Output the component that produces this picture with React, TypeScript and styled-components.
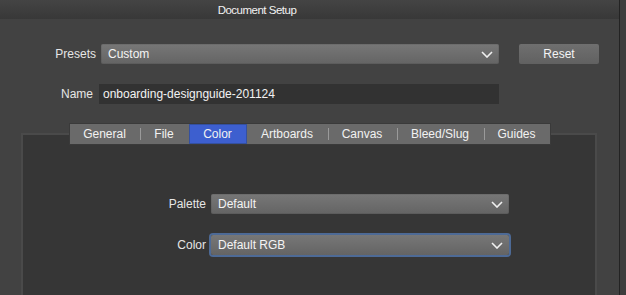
import React from "react";
import styled, { createGlobalStyle } from "styled-components";

const GlobalStyle = createGlobalStyle`
  html, body {
    margin: 0;
    padding: 0;
    background: #424242;
  }
  body {
    font-family: "Liberation Sans", Arial, sans-serif;
    font-size: 12px;
    color: #ececec;
  }
`;

const Window = styled.div`
  width: 626px;
  height: 295px;
  display: flex;
  overflow: hidden;
  background: #424242;
`;

const Main = styled.div`
  width: 619px;
  display: flex;
  flex-direction: column;
`;

const Divider = styled.div`
  width: 1px;
  background: #232323;
`;

const SideStrip = styled.div`
  flex: 1;
  background: #3d3d3d;
`;

const TitleBar = styled.div`
  height: 19px;
  display: flex;
  align-items: center;
  justify-content: center;
  padding-right: 105px;
  background: linear-gradient(#444444, #383838);
  color: #f2f2f2;
  font-size: 11.5px;
  letter-spacing: -0.5px;
`;

const Form = styled.div`
  display: flex;
  flex-direction: column;
  padding-top: 25px;
`;

const Row = styled.div<{ $gap?: number; $mt?: number }>`
  display: flex;
  align-items: center;
  gap: ${({ $gap }) => $gap ?? 5}px;
  margin-top: ${({ $mt }) => $mt ?? 0}px;
`;

const Label = styled.label<{ $width: number }>`
  width: ${({ $width }) => $width}px;
  text-align: right;
  color: #e6e6e6;
  flex-shrink: 0;
`;

const Select = styled.div<{ $width: number; $focused?: boolean }>`
  width: ${({ $width }) => $width}px;
  height: 20px;
  box-sizing: border-box;
  display: flex;
  align-items: center;
  justify-content: space-between;
  padding: 0 6px 0 7px;
  border-radius: 2px;
  background: linear-gradient(#777777, #646464);
  color: #f4f4f4;
  box-shadow: ${({ $focused }) =>
    $focused ? "0 0 0 2px #4d6a96" : "inset 0 0 0 1px rgba(0,0,0,0.08)"};
`;

const Chevron = () => (
  <svg width="12" height="7" viewBox="0 0 12 7">
    <path d="M1 1 L6 6 L11 1" fill="none" stroke="#f0f0f0" strokeWidth="1.6" />
  </svg>
);

const Button = styled.button`
  width: 80px;
  height: 20px;
  margin-left: 15px;
  border: none;
  border-radius: 2px;
  background: linear-gradient(#6f6f6f, #616161);
  color: #f4f4f4;
  font: inherit;
  padding: 0;
`;

const TextInput = styled.div`
  width: 400px;
  height: 20px;
  box-sizing: border-box;
  display: flex;
  align-items: center;
  padding-left: 4px;
  background: #323232;
  color: #f2f2f2;
`;

const TabSection = styled.div`
  margin-top: 20px;
  padding: 0 22px 0 21px;
  display: flex;
  flex-direction: column;
  flex: 1;
`;

const TabBar = styled.div`
  position: relative;
  z-index: 1;
  align-self: center;
  display: flex;
  height: 20px;
  margin-left: 1px;
  background: #6a6a6a;
  box-shadow: 0 0 0 1px #3a3a3a;
`;

const Tab = styled.div<{ $active?: boolean; $sep?: boolean; $w: number }>`
  position: relative;
  width: ${({ $w }) => $w}px;
  display: flex;
  align-items: center;
  justify-content: center;
  color: #f2f2f2;
  background: ${({ $active }) => ($active ? "#3d5fcf" : "transparent")};
  box-shadow: ${({ $active }) => ($active ? "inset 0 0 0 1px #34509f" : "none")};

  &::before {
    content: "";
    display: ${({ $sep }) => ($sep ? "block" : "none")};
    position: absolute;
    left: 0;
    top: 4px;
    width: 1px;
    height: 12px;
    background: #9a9a9a;
  }
`;

const Panel = styled.div`
  flex: 1;
  margin-top: -11px;
  border: 2px solid #4a4a4a;
  border-bottom: none;
  background: #363636;
  display: flex;
  flex-direction: column;
  padding-top: 59px;
`;

const tabs = [
  { name: "General", w: 70 },
  { name: "File", w: 49 },
  { name: "Color", w: 58 },
  { name: "Artboards", w: 81 },
  { name: "Canvas", w: 69 },
  { name: "Bleed/Slug", w: 87 },
  { name: "Guides", w: 66 },
];

export default function App() {
  const active = "Color";
  return (
    <>
      <GlobalStyle />
      <Window>
        <Main>
          <TitleBar>Document Setup</TitleBar>
          <Form>
            <Row>
              <Label $width={96}>Presets</Label>
              <Select $width={398}>
                <span>Custom</span>
                <Chevron />
              </Select>
              <Button>Reset</Button>
            </Row>
            <Row $gap={6} $mt={20}>
              <Label $width={93}>Name</Label>
              <TextInput>onboarding-designguide-201124</TextInput>
            </Row>
          </Form>
          <TabSection>
            <TabBar>
              {tabs.map((t, i) => {
                const prev = tabs[i - 1];
                const sep =
                  i > 0 && t.name !== active && prev.name !== active;
                return (
                  <Tab key={t.name} $w={t.w} $active={t.name === active} $sep={sep}>
                    {t.name}
                  </Tab>
                );
              })}
            </TabBar>
            <Panel>
              <Row>
                <Label $width={183}>Palette</Label>
                <Select $width={298}>
                  <span>Default</span>
                  <Chevron />
                </Select>
              </Row>
              <Row $mt={21}>
                <Label $width={183}>Color</Label>
                <Select $width={298} $focused>
                  <span>Default RGB</span>
                  <Chevron />
                </Select>
              </Row>
            </Panel>
          </TabSection>
        </Main>
        <Divider />
        <SideStrip />
      </Window>
    </>
  );
}
